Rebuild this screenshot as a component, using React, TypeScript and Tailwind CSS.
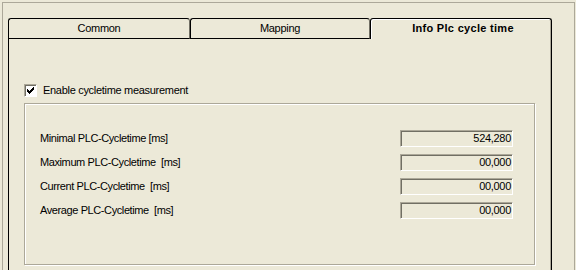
export default function App() {
  const rows: [string, string][] = [
    ["Minimal PLC-Cycletime [ms]", "524,280"],
    ["Maximum PLC-Cycletime  [ms]", "00,000"],
    ["Current PLC-Cycletime  [ms]", "00,000"],
    ["Average PLC-Cycletime  [ms]", "00,000"],
  ];
  const check = [
    [1, 3],
    [2, 4],
    [3, 5],
    [4, 4],
    [5, 3],
    [6, 2],
    [7, 1],
  ];
  return (
    <div className="w-[576px] h-[270px] overflow-hidden bg-[#ECE9D8] pt-[2px] pl-[2px] pr-[1px] font-['Liberation_Sans',Arial,sans-serif] text-[11px] leading-[13px] text-black tracking-[-0.3px]">
      <div className="h-[300px] border-t border-l border-r border-[#ACA899] pt-[15px] pl-[5px] flex flex-col">
        <div className="flex h-[21px]">
          <div className="w-[182px] h-[21px] border border-t-black border-l-black border-b-black border-r-[#716F64] rounded-t-[3px] flex items-center justify-center">
            Common
          </div>
          <div className="w-[180px] h-[21px] border border-t-black border-l-black border-b-black border-r-[#716F64] rounded-t-[3px] flex items-center justify-center">
            Mapping
          </div>
          <div className="w-[182px] h-[21px] border-t border-l border-r border-black rounded-t-[3px] shadow-[inset_1px_1px_0_#fff,inset_-1px_0_0_#ACA899] font-bold tracking-[0.3px] flex items-center justify-center pb-[1px] pl-[4px]">
            Info Plc cycle time
          </div>
        </div>
        <div className="w-[544px] flex-1 border-l border-r border-black shadow-[inset_-1px_0_0_#ACA899] pl-[15px] pt-[45px]">
          <div className="flex items-center h-[13px] gap-[6px]">
            <div className="w-[13px] h-[13px] border-t border-l border-[#ACA899] border-b border-r border-b-white border-r-white shadow-[inset_1px_1px_0_#716F64] bg-white flex items-start justify-start">
              <svg width="9" height="9" viewBox="0 0 9 9" className="mt-[1px] ml-[1px]" shapeRendering="crispEdges">
                {check.map(([x, y]) => (
                  <rect key={x} x={x} y={y} width="1" height="3" fill="#000" />
                ))}
              </svg>
            </div>
            <span>Enable cycletime measurement</span>
          </div>
          <div className="mt-[6px] w-[511px] h-[162px] border border-[#ACA899] shadow-[inset_1px_1px_0_#fff,1px_1px_0_#fff] pt-[26px] pl-[15px] pr-[21px] flex flex-col gap-[7px]">
            {rows.map(([label, value]) => (
              <div key={label} className="flex items-center justify-between h-[17px]">
                <span className="whitespace-pre tracking-[-0.4px]">{label}</span>
                <div className="w-[113px] h-[17px] border-t border-l border-[#ACA899] border-b border-r border-b-white border-r-white shadow-[inset_1px_1px_0_#716F64] flex items-center justify-end pr-[1px]">
                  {value}
                </div>
              </div>
            ))}
          </div>
        </div>
      </div>
    </div>
  );
}
